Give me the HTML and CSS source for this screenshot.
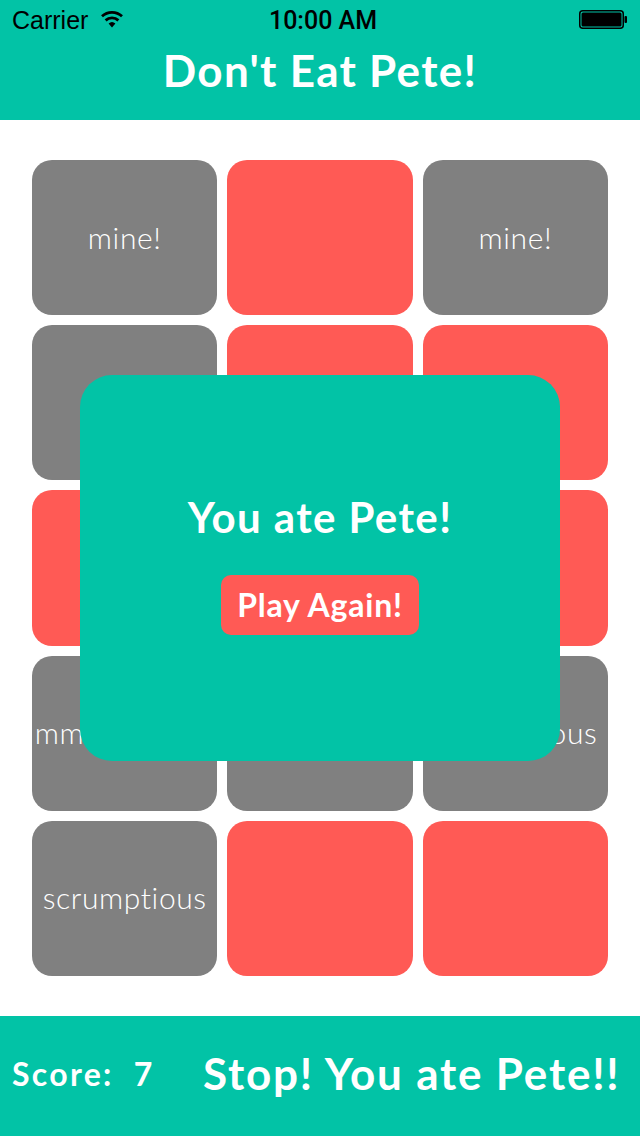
FILE: index.html
```html
<!DOCTYPE html>
<html lang="en">
<head>
<meta charset="utf-8">
<title>Don't Eat Pete!</title>
<link rel="stylesheet" href="styles.css">
</head>
<body>
<div class="phone">
  <header class="top">
    <div class="status">
      <div class="status-left">
        <span class="carrier">Carrier</span>
        <svg class="wifi" width="24" height="18" viewBox="0 0 24 18">
          <path d="M12 17.5 L8.6 13.6 A5 5 0 0 1 15.4 13.6 Z" fill="#000"/>
          <path d="M5.6 10.4 A9.4 9.4 0 0 1 18.4 10.4" fill="none" stroke="#000" stroke-width="2.8"/>
          <path d="M2 6.3 A14.6 14.6 0 0 1 22 6.3" fill="none" stroke="#000" stroke-width="2.8"/>
        </svg>
      </div>
      <div class="time">10:00 AM</div>
      <div class="status-right">
        <svg class="battery" width="50" height="20" viewBox="0 0 50 20">
          <rect x="0.75" y="0.75" width="43.5" height="17.5" rx="3" fill="none" stroke="#000" stroke-width="1.5"/>
          <rect x="2.5" y="2.5" width="40" height="14" rx="1.5" fill="#000"/>
          <rect x="45.5" y="6" width="2.5" height="7" rx="1" fill="#000"/>
        </svg>
      </div>
    </div>
    <h1 class="title">Don't Eat Pete!</h1>
  </header>

  <main class="board">
    <div class="grid">
      <div class="tile gray">mine!</div>
      <div class="tile red"></div>
      <div class="tile gray">mine!</div>

      <div class="tile gray"></div>
      <div class="tile red"></div>
      <div class="tile red"></div>

      <div class="tile red"></div>
      <div class="tile gray"></div>
      <div class="tile red"></div>

      <div class="tile gray">mmmm, yum!</div>
      <div class="tile gray"></div>
      <div class="tile gray">scrumptious</div>

      <div class="tile gray">scrumptious</div>
      <div class="tile red"></div>
      <div class="tile red"></div>
    </div>

    <div class="modal">
      <h2 class="modal-title">You ate Pete!</h2>
      <button class="again">Play Again!</button>
    </div>
  </main>

  <footer class="bar">
    <span class="score">Score:<span class="score-num">7</span></span>
    <span class="msg">Stop! You ate Pete!!</span>
  </footer>
</div>
</body>
</html>
```

FILE: styles.css
```css
html, body {
  margin: 0;
  padding: 0;
  background: #ffffff;
}

.phone {
  width: 640px;
  height: 1136px;
  display: flex;
  flex-direction: column;
  font-family: Lato, "Open Sans", sans-serif;
  overflow: hidden;
}

.top {
  height: 120px;
  background: #02c3a6;
  display: flex;
  flex-direction: column;
}

.status {
  height: 40px;
  display: grid;
  grid-template-columns: 1fr auto 1fr;
  align-items: center;
  padding: 0 12px;
  font-family: "Liberation Sans", Arial, sans-serif;
  color: #000;
}

.status-left {
  display: flex;
  align-items: center;
  gap: 12px;
  font-size: 25px;
}

.time {
  font-family: Roboto, "Liberation Sans", sans-serif;
  font-size: 25px;
  font-weight: 500;
  padding-left: 6px;
}

.status-right {
  display: flex;
  justify-content: flex-end;
}

.battery {
  display: block;
  margin-right: -1px;
}

.wifi {
  display: block;
  margin-top: -2px;
}

.title {
  margin: 0;
  flex: 1;
  display: flex;
  align-items: center;
  justify-content: center;
  color: #ffffff;
  font-size: 44px;
  font-weight: 700;
  letter-spacing: 1.3px;
  padding-bottom: 20px;
}

.board {
  position: relative;
  flex: 1;
  padding: 40px 32px;
}

.grid {
  display: grid;
  grid-template-columns: repeat(3, minmax(0, 1fr));
  grid-template-rows: repeat(5, minmax(0, 1fr));
  gap: 10px;
  height: 816px;
}

.tile {
  min-width: 0;
  border-radius: 20px;
  display: flex;
  align-items: center;
  justify-content: center;
  color: #ffffff;
  font-family: Lato, "Open Sans", sans-serif;
  font-weight: 300;
  font-size: 30px;
  letter-spacing: 0.6px;
  white-space: nowrap;
  padding-bottom: 2px;
  box-sizing: border-box;
}

.gray { background: #808080; }
.red { background: #ff5a55; }

.modal {
  position: absolute;
  left: 80px;
  top: 255px;
  width: 480px;
  height: 386px;
  background: #02c3a6;
  border-radius: 32px;
  display: flex;
  flex-direction: column;
  align-items: center;
  padding-top: 117px;
  box-sizing: border-box;
}

.modal-title {
  margin: 0;
  color: #ffffff;
  font-size: 42px;
  font-weight: 700;
  letter-spacing: 1.4px;
  line-height: 50px;
}

.again {
  margin-top: 33px;
  width: 198px;
  height: 60px;
  border: none;
  border-radius: 10px;
  background: #ff5a55;
  color: #ffffff;
  font-family: Lato, "Open Sans", sans-serif;
  font-size: 32px;
  font-weight: 700;
  letter-spacing: 0.8px;
  padding: 0 0 2px;
}

.bar {
  height: 120px;
  background: #02c3a6;
  display: flex;
  align-items: center;
  padding: 0 12px 6px;
  box-sizing: border-box;
  color: #ffffff;
  font-weight: 700;
}

.score {
  font-size: 32px;
  width: 191px;
  letter-spacing: 2.3px;
}

.score-num {
  margin-left: 20px;
}

.msg {
  font-size: 44px;
  letter-spacing: 1.8px;
}
```
